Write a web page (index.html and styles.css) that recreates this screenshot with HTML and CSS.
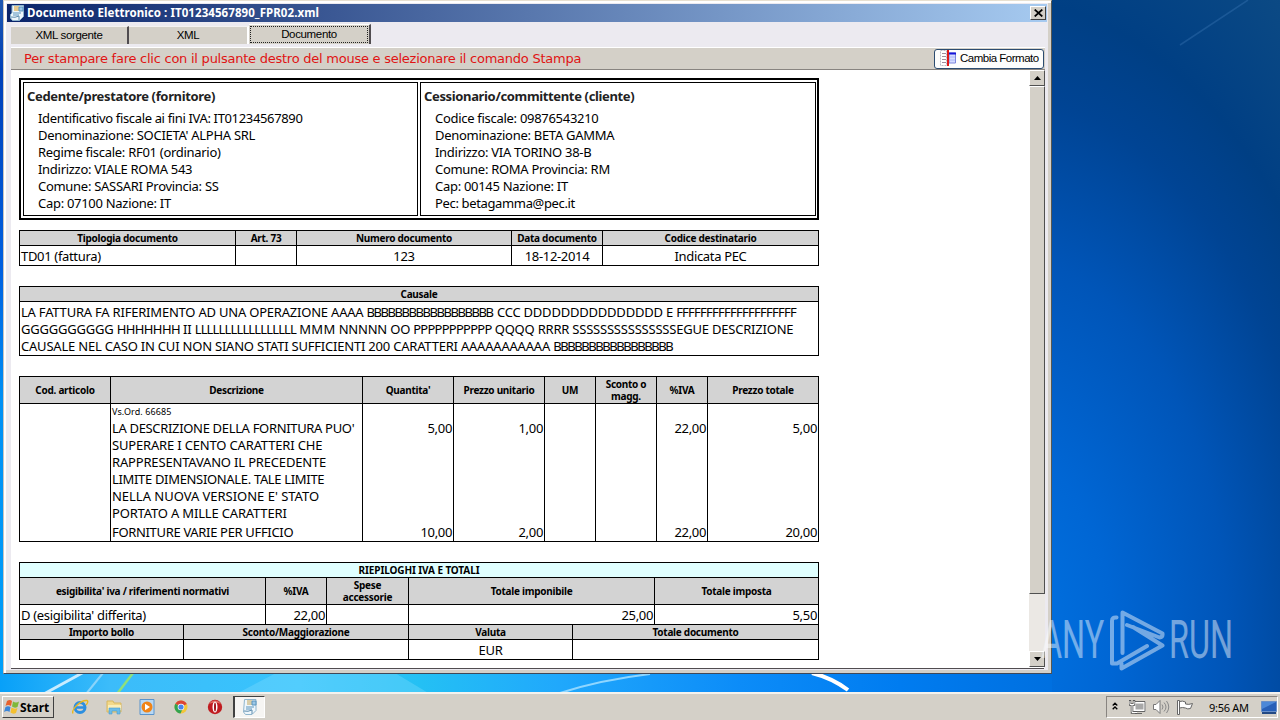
FILE: index.html
```html
<!DOCTYPE html>
<html lang="it">
<head>
    <meta charset="UTF-8">
    <meta name="viewport" content="width=device-width, initial-scale=1.0">
    <title>Documento Elettronico</title>
    <link rel="stylesheet" href="styles.css">
</head>
<body>
    <!-- wallpaper streaks -->
    <svg class="streaks" viewBox="0 0 1280 720">
        <path d="M1248 0 L1180 45" stroke="#3a76b4" stroke-width="1.5" opacity=".4"/>
        <path d="M42 695 L84 672" stroke="#c8ecff" stroke-width="3"/>
        <path d="M86 694 L103 673" stroke="#8ad4fa" stroke-width="2"/>
        <path d="M117 694 L133 673" stroke="#8fe07c" stroke-width="2.5"/>
        <path d="M236 694 L276 673 L395 673 L430 694z" fill="#8ee0ff" opacity=".3"/>
        <path d="M560 693 Q600 680 650 674" stroke="#8fd6ff" stroke-width="2" fill="none"/>
        <path d="M812 673 Q832 678 848 690" stroke="#fff" stroke-width="4" fill="none"/>
    </svg>

    <main class="window">
        <header class="titlebar">
            <svg class="app-icon" width="14" height="16" viewBox="0 0 14 16">
                <path d="M2 .5h11.500v11l-4 4H2.500L.5 13V9.500L2 8z" fill="#eef6fb" stroke="#8fb4cc"/>
                <path d="M4 1h5v5H4z" fill="#e8c98c"/>
                <path d="M9 2h4v4H9zM3 8h8M3 10h6" fill="#9cc7e6" stroke="#5b94bd"/>
                <path d="M1 12q4 1 8-1v4" fill="none" stroke="#5e8cae"/>
            </svg>
            <h1>Documento Elettronico : IT01234567890_FPR02.xml</h1>
            <button class="close" aria-label="Chiudi">
                <svg width="9" height="8" viewBox="0 0 9 8"><path d="M.7.5l7.600 7M8.300.5l-7.600 7" stroke="#000" stroke-width="1.700"/></svg>
            </button>
        </header>

        <nav class="tabs">
            <div class="tab"><span>XML sorgente</span></div>
            <div class="tab tab-xml"><span>XML</span></div>
            <div class="tab active"><span>Documento</span></div>
        </nav>

        <div class="toolbar">
            <p class="hint">Per stampare fare clic con il pulsante destro del mouse e selezionare il comando Stampa</p>
            <button class="format-btn">
                <svg width="16" height="16" viewBox="0 0 16 16">
                    <path d="M.5.500h6v15h-6z" fill="#fff" stroke="#b9b9c4" stroke-dasharray="2 1"/>
                    <path d="M2 3.500h4M2 6.500h4M2 9.500h4M2 12.500h4" stroke="#a08c9c"/>
                    <path d="M9 3h6.500v10H9z" fill="#d5dcff" stroke="#7d86dc"/>
                    <path d="M9 3.500h7" stroke="#1414d8" stroke-width="2"/>
                    <path d="M10 7h5M10 10h5" stroke="#aab4f4"/>
                    <path d="M8 0v16" stroke="#e01818" stroke-width="2"/>
                </svg>
                <span>Cambia Formato</span>
            </button>
        </div>

        <div class="viewport">
            <div class="page">
                <section class="parties">
                    <div class="party">
                        <h2>Cedente/prestatore (fornitore)</h2>
                        <ul>
                            <li class="tight">Identificativo fiscale ai fini IVA: IT01234567890</li>
                            <li>Denominazione: SOCIETA' ALPHA SRL</li>
                            <li>Regime fiscale: RF01 (ordinario)</li>
                            <li>Indirizzo: VIALE ROMA 543</li>
                            <li>Comune: SASSARI Provincia: SS</li>
                            <li>Cap: 07100 Nazione: IT</li>
                        </ul>
                    </div>
                    <div class="party">
                        <h2>Cessionario/committente (cliente)</h2>
                        <ul>
                            <li>Codice fiscale: 09876543210</li>
                            <li>Denominazione: BETA GAMMA</li>
                            <li>Indirizzo: VIA TORINO 38-B</li>
                            <li>Comune: ROMA Provincia: RM</li>
                            <li>Cap: 00145 Nazione: IT</li>
                            <li class="tight">Pec: betagamma@pec.it</li>
                        </ul>
                    </div>
                </section>

                <section class="sheet sheet-doc">
                    <div class="row head cols-doc">
                        <div>Tipologia documento</div><div>Art. 73</div><div>Numero documento</div><div>Data documento</div><div>Codice destinatario</div>
                    </div>
                    <div class="row data cols-doc">
                        <div class="left">TD01 (fattura)</div><div></div><div>123</div><div>18-12-2014</div><div>Indicata PEC</div>
                    </div>
                </section>

                <section class="sheet">
                    <div class="row head"><div>Causale</div></div>
                    <div class="row causale">
                        <div>LA FATTURA FA RIFERIMENTO AD UNA OPERAZIONE AAAA <span class="narrow">BBBBBBBBBBBBBBBBBB</span> &#8202;CCC DDDDDDDDDDDDDDD E <span class="tight">FFFFFFFFFFFFFFFFFFFF</span><br>GGGGGGGGGG <span class="snug">HHHHHHH</span> II <span class="tighter">LLLLLLLLLLLLLLLLL</span> <span class="wide">MMM</span> NNNNN OO <span class="tight">PPPPPPPPPPP</span> QQQQ RRRR SSSSSSSSSSSSSSSEGUE DESCRIZIONE<br>CAUSALE NEL CASO IN CUI NON SIANO STATI SUFFICIENTI 200 CARATTERI AAAAAAAAAAA <span class="narrow">BBBBBBBBBBBBBBBBB</span></div>
                    </div>
                </section>

                <section class="sheet">
                    <div class="row head tall cols-items">
                        <div>Cod. articolo</div><div>Descrizione</div><div>Quantita'</div><div>Prezzo unitario</div><div>UM</div><div>Sconto o<br>magg.</div><div>%IVA</div><div>Prezzo totale</div>
                    </div>
                    <div class="row item first cols-items">
                        <div></div>
                        <div class="desc"><small>Vs.Ord. 66685</small>LA DESCRIZIONE DELLA FORNITURA PUO'<br><span class="loose">SUPERARE I CENTO CARATTERI CHE</span><br><span class="loose">RAPPRESENTAVANO IL PRECEDENTE</span><br>LIMITE DIMENSIONALE. TALE LIMITE<br><span class="looser">NELLA NUOVA VERSIONE E' STATO</span><br><span class="loose">PORTATO A MILLE CARATTERI</span></div>
                        <div>5,00</div><div>1,00</div><div></div><div></div><div>22,00</div><div>5,00</div>
                    </div>
                    <div class="row item last cols-items">
                        <div></div><div class="desc">FORNITURE VARIE PER UFFICIO</div><div>10,00</div><div>2,00</div><div></div><div></div><div>22,00</div><div>20,00</div>
                    </div>
                </section>

                <section class="sheet">
                    <div class="row head title"><div>RIEPILOGHI IVA E TOTALI</div></div>
                    <div class="row head tall cols-vat">
                        <div>esigibilita' iva / riferimenti normativi</div><div>%IVA</div><div>Spese<br>accessorie</div><div>Totale imponibile</div><div>Totale imposta</div>
                    </div>
                    <div class="row data nums cols-vat">
                        <div class="left">D (esigibilita' differita)</div><div>22,00</div><div></div><div>25,00</div><div>5,50</div>
                    </div>
                    <div class="row head cols-total">
                        <div>Importo bollo</div><div>Sconto/Maggiorazione</div><div>Valuta</div><div>Totale documento</div>
                    </div>
                    <div class="row data cols-total">
                        <div></div><div></div><div>EUR</div><div></div>
                    </div>
                </section>
            </div>
            <div class="scrollbar">
                <div class="arrow"><svg width="7" height="4" viewBox="0 0 7 4"><path d="M0 4L3.500 0 7 4z"/></svg></div>
                <div class="thumb"></div>
                <div class="arrow bottom"><svg width="7" height="4" viewBox="0 0 7 4"><path d="M0 0h7L3.500 4z"/></svg></div>
            </div>
        </div>
    </main>

    <div class="watermark">
        <span class="word">ANY</span>
        <svg width="56" height="64" viewBox="1109 608 56 64">
            <path d="M1116.500 617.500Q1112 617 1112 621V663.500H1117L1147 646M1122.500 653V612.500L1162.500 633.500Q1163 637 1159.500 637.500L1127 625M1121.500 663.500V668.500L1162.500 645.500L1133 627" fill="none" stroke="#fff" stroke-width="4" stroke-linejoin="round" stroke-linecap="round"/>
        </svg>
        <span class="word">RUN</span>
    </div>

    <footer class="taskbar">
        <button class="start">
            <svg width="16" height="16" viewBox="0 0 16 16">
                <path d="M3 2q3-2 5 0L7 7Q4 5 1.500 7z" fill="#e8622c"/>
                <path d="M9 2.500q3 2 6 0L13.500 8q-3 1.500-5.500-.5z" fill="#7fb83a"/>
                <path d="M1.500 8Q4 6.500 6.500 8L5.500 13Q3 11 0 13z" fill="#3c86d8"/>
                <path d="M7.500 8.500q3 2 6 .5L12 14q-3 1.500-5.500-.5z" fill="#f4c030"/>
            </svg>
            <span>Start</span>
        </button>
        <div class="launchers">
            <svg width="17" height="16" viewBox="0 0 17 16">
                <circle cx="8" cy="8.500" r="5" fill="none" stroke="#2d8fe0" stroke-width="3"/>
                <path d="M4 8.500h9" stroke="#2d8fe0" stroke-width="2.500"/>
                <path d="M1 14.500C-1 11 8 1 15 1.500c1.500.5.500 3-1 4.500" fill="none" stroke="#e8b820" stroke-width="1.400"/>
            </svg>
            <svg width="17" height="16" viewBox="0 0 17 16">
                <path d="M1 2h6l1 2h7v9H1z" fill="#f3d98a" stroke="#d8b860"/>
                <path d="M2 6h13v5H2z" fill="#fbeeb8"/>
                <path d="M3 15V9h11v6h-3v-3H6v3z" fill="#6cbce8" stroke="#4a9ccc" stroke-width=".6"/>
            </svg>
            <svg width="17" height="16" viewBox="0 0 17 16">
                <path d="M1 .5h14v15H1z" fill="#b8d8f4" stroke="#5a94cc"/>
                <circle cx="8" cy="8" r="5.500" fill="#f08418"/>
                <path d="M6 4.800v6.400l5-3.200z" fill="#fff"/>
            </svg>
            <svg width="17" height="16" viewBox="0 0 17 16">
                <circle cx="8" cy="8" r="6.500" fill="#f2c63a"/>
                <path d="M8 8L2.300 4.800A6.500 6.500 0 0 1 13.800 5z" fill="#dc4436"/>
                <path d="M8 8L2.300 4.800A6.500 6.500 0 0 0 7.500 14.500L10 9z" fill="#32a350"/>
                <circle cx="8" cy="8" r="3.300" fill="#fff"/>
                <circle cx="8" cy="8" r="2.600" fill="#4a84ec"/>
            </svg>
            <svg width="17" height="16" viewBox="0 0 17 16">
                <circle cx="8" cy="8" r="7.200" fill="#c01c20"/>
                <path d="M2 5a7 7 0 0 1 12 0q-6-3-12 0" fill="#e06a60"/>
                <ellipse cx="8" cy="8" rx="2.500" ry="5.500" fill="#fff"/>
                <ellipse cx="8" cy="8" rx="1" ry="4.500" fill="#a01418"/>
            </svg>
            <div class="running">
                <svg width="14" height="16" viewBox="0 0 14 16">
                    <path d="M1.500.500h11.500v11l-4 4H2.500L.5 13z" fill="#eef6fb" stroke="#8fb4cc"/>
                    <path d="M4 1h5v5H4z" fill="#d9cda8"/>
                    <path d="M9 2h4v4H9zM3 8h8M3 10h6" fill="#9cc7e6" stroke="#5b94bd"/>
                    <path d="M1 12q4 1 8-1v4" fill="none" stroke="#5e8cae"/>
                </svg>
            </div>
        </div>
        <div class="tray">
            <svg class="chevrons" width="6" height="8" viewBox="0 0 6 8"><path d="M.7 3.500L3 1.200l2.300 2.300M.7 7.300L3 5l2.300 2.300" fill="none" stroke="#000" stroke-width="1.300"/></svg>
            <svg class="net" width="17" height="15" viewBox="0 0 17 15">
                <path d="M5.500 2.500h10v8h-10z" fill="#a8a8a8" stroke="#fff" stroke-width="2"/>
                <path d="M5.500 1.500h10.500v10H4.500M6 13.500h7" fill="none" stroke="#666"/>
                <path d="M1 0v4.500h4V0M3 4.500v8h5" fill="none" stroke="#555" stroke-width="2.400"/>
                <path d="M1 1v3.500h4V1M3 4.500v8h5" fill="none" stroke="#fff" stroke-width="1"/>
            </svg>
            <svg class="vol" width="17" height="14" viewBox="0 0 17 14">
                <path d="M.5 4.500h2.500l4-4v13l-4-4H.5z" fill="#fff" stroke="#777"/>
                <path d="M9 4.500q2 2.500 0 5M11 2.500q4 4.500 0 9M13.500 1q4.500 6 0 12" fill="none" stroke="#888"/>
            </svg>
            <svg class="flag" width="17" height="15" viewBox="0 0 17 15">
                <path d="M.5.500h2v14h-2zM2.500 1.500q3-1 6 .5v2q3 1 7-.5l-2 5q-3 1-5-.5-3-1-6 0z" fill="#fff" stroke="#666"/>
            </svg>
            <time>9:56 AM</time>
            <svg class="desktop-icon" width="16" height="13" viewBox="0 0 16 13">
                <path d="M.5.500h15v10H.5z" fill="#2860b8" stroke="#6a90c8"/>
                <path d="M1 1h14L1 8z" fill="#4c88d8"/>
                <path d="M1 12h14" stroke="#244a84" stroke-width="2"/>
            </svg>
        </div>
    </footer>
</body>
</html>
```
FILE: styles.css
```css
:root {
    --face: #d4d0c8;
    --panel: #eceaf0;
    --dark: #504c50;
    --ink: #000;
    --head: #d3d3d3;
}

* {
    margin: 0;
    padding: 0;
    box-sizing: border-box;
}

body {
    position: relative;
    display: flex;
    flex-direction: column;
    justify-content: flex-end;
    width: 1280px;
    height: 720px;
    overflow: hidden;
    font-family: "Noto Sans", sans-serif;
    color: var(--ink);
    background:
        linear-gradient(to right, #08a0f8, #3cbcfa 110px, #38c4fc 300px, #24c0f4 420px, #20a8fc 560px, #0c8cf8 740px, #007cf0 900px, #0070e0 1050px) 0 674px / 1052px 20px no-repeat,
        linear-gradient(#2058b0, #0040b8 70px, #0060e0 270px, #0090f4 400px, #00a0fa) 0 0 / 4px 700px no-repeat,
        radial-gradient(ellipse 380px 640px at 1000px 640px, #0074e4, #0066d4 30%, #0055b8 60%, #004494 85%, #003f84 100%, #0c4a84 125%);
}

button {
    font-family: inherit;
    color: inherit;
}

svg {
    flex: none;
}

.streaks {
    position: absolute;
    inset: 0;
    width: 1280px;
    height: 720px;
}

/* ---- window ---- */

.window {
    position: absolute;
    left: 3px;
    top: 0;
    width: 1049px;
    height: 674px;
    padding: 4px 4px 3px 3px;
    display: flex;
    flex-direction: column;
    background: var(--panel);
    border-top: 1px solid #e8e0d0;
    border-left: 1px solid #c8c4c0;
    border-right: 1px solid #585850;
    border-bottom: 1px solid #404858;
    box-shadow: inset 2px 2px #fff, inset -3px -3px var(--face);
}

.titlebar {
    display: flex;
    align-items: center;
    height: 18px;
    flex: none;
    margin-top: -1px;
    padding: 0 1px 0 3px;
    background: linear-gradient(to right, #0a246a, #a6caf0);
    color: #fff;
}

.titlebar h1 {
    flex: 1;
    margin-left: 3px;
    font-size: 11.5px;
    line-height: 16px;
    font-weight: 700;
    letter-spacing: 0.07px;
}

.close {
    display: flex;
    align-items: center;
    justify-content: center;
    width: 16px;
    height: 14px;
    background: var(--face);
    border: 1px solid;
    border-color: #fff #404040 #404040 #fff;
}

.tabs {
    display: flex;
    align-items: flex-end;
    height: 22px;
    flex: none;
    padding-left: 4px;
    font-family: "Liberation Sans", sans-serif;
    font-size: 11.5px;
    line-height: 17px;
    text-align: center;
}

.tab {
    width: 118px;
    height: 18px;
    background: var(--face);
    border-top: 1px solid #f4f2f0;
    border-right: 2px solid var(--dark);
}

.tab span {
    letter-spacing: -0.35px;
}

.tab-xml {
    width: 120px;
    border-right-color: #fff;
}

.tab.active {
    width: 122px;
    height: 20px;
    padding: 1px;
    border-top-color: #fff;
}

.tab.active span {
    display: block;
    height: 17px;
    line-height: 15px;
    border: 1px dotted #222;
}

.toolbar {
    display: flex;
    justify-content: space-between;
    align-items: center;
    height: 23px;
    flex: none;
    margin: 3px 2px 0 4px;
    padding: 0 1px 0 13px;
    background: var(--face);
    border-top: 1px solid #fff;
    border-bottom: 1px solid #888480;
}

.hint {
    font-family: "DejaVu Sans", sans-serif;
    font-size: 13px;
    line-height: 20px;
    letter-spacing: -0.245px;
    color: #e01414;
}

.format-btn {
    display: flex;
    align-items: center;
    gap: 4px;
    width: 110px;
    height: 20px;
    padding: 0 0 1px 5px;
    background: #fdfdfc;
    border: 1px solid #2c4c70;
    border-radius: 3px;
    font-family: "Liberation Sans", sans-serif;
    font-size: 11.5px;
    letter-spacing: -0.5px;
    white-space: nowrap;
}

.viewport {
    display: flex;
    height: 599px;
    flex: none;
    margin: 0 3px 0 4px;
    background: #fff;
    border-bottom: 1px solid var(--dark);
}

.page {
    width: 1018px;
    flex: none;
    padding: 8px 0 0 8px;
}

.scrollbar {
    display: flex;
    flex-direction: column;
    width: 16px;
    height: 597px;
    flex: none;
    background: #ebe8e4;
}

.arrow,
.thumb {
    background: var(--face);
    border: 1px solid;
    border-color: #fff #505050 #505050 #fff;
}

.arrow {
    display: flex;
    align-items: center;
    justify-content: center;
    height: 16px;
}

.thumb {
    height: 508px;
}

.arrow.bottom {
    margin-top: auto;
}

/* ---- invoice ---- */

.parties {
    display: flex;
    gap: 2px;
    width: 800px;
    height: 142px;
    padding: 2px 1px 2px 2px;
    border: 2px solid #000;
}

.party {
    flex: 0 0 395px;
    padding: 3px 3px 0;
    border: 1px solid #000;
}

.party + .party {
    flex: 1;
}

.party h2 {
    font-size: 13px;
    line-height: 20px;
    font-weight: 700;
    letter-spacing: -0.35px;
    color: #222;
}

.party ul {
    margin: 4px 0 0 11px;
    list-style: none;
    font-size: 13px;
    line-height: 17px;
    letter-spacing: -0.29px;
}

.party .tight {
    letter-spacing: -0.35px;
}

.sheet {
    width: 800px;
    margin-bottom: 20px;
    border-top: 1px solid #000;
    border-left: 1px solid #000;
    letter-spacing: -0.33px;
    font-size: 13px;
}

.sheet-doc {
    margin-top: 10px;
}

.row {
    display: grid;
    grid-template-columns: 799px;
}

.cols-doc { grid-template-columns: 216px 61px 215px 91px 216px; }
.cols-items { grid-template-columns: 91px 252px 91px 91px 51px 61px 51px 111px; }
.cols-vat { grid-template-columns: 246px 61px 82px 246px 164px; }
.cols-total { grid-template-columns: 164px 225px 164px 246px; }

.row > div {
    border-right: 1px solid #000;
    border-bottom: 1px solid #000;
    text-align: center;
    white-space: nowrap;
}

.head {
    height: 15px;
    background: var(--head);
    font-size: 10px;
    line-height: 14px;
    font-weight: 700;
    letter-spacing: -0.27px;
}

.head.tall {
    height: 27px;
    line-height: 12px;
}

.head.tall > div {
    display: flex;
    align-items: center;
    justify-content: center;
}

.head.title {
    background: #e0ffff;
    letter-spacing: -0.1px;
}

.data > div {
    height: 20px;
    line-height: 20px;
}

.row > .left,
.causale > div {
    padding-left: 1px;
    text-align: left;
}

.causale > div {
    height: 54px;
    padding-top: 2px;
    line-height: 17px;
    letter-spacing: -0.21px;
}

/* per-letter fitting of the long runs */
.causale .narrow { letter-spacing: -1.45px; }
.causale .tighter { letter-spacing: -0.85px; }
.causale .tight { letter-spacing: -0.75px; }
.causale .snug { letter-spacing: -0.6px; }
.causale .wide { letter-spacing: 0.3px; }

.row.item > div {
    border-bottom: 0;
    padding-right: 1px;
    text-align: right;
    line-height: 17px;
}

.row.first > div {
    height: 118px;
    padding-top: 16px;
}

.row.last > div {
    height: 20px;
    padding-top: 2px;
    border-bottom: 1px solid #000;
}

.row.item > .desc {
    text-align: left;
    padding-left: 1px;
}

.row.first > .desc {
    padding-top: 0;
}

.desc .loose { letter-spacing: -0.17px; }
.desc .looser { letter-spacing: -0.02px; }

.desc small {
    display: block;
    height: 16px;
    font-size: 9px;
    line-height: 15px;
    letter-spacing: 0.1px;
}

.row.nums > div:not(.left) {
    padding-right: 1px;
    text-align: right;
}

/* ---- watermark ---- */

.watermark {
    position: absolute;
    left: 1041px;
    top: 608px;
    display: flex;
    align-items: center;
    gap: 4px;
    width: 200px;
    height: 64px;
    opacity: 0.45;
    color: #fff;
    font-family: Roboto, sans-serif;
    font-size: 53px;
    line-height: 64px;
}

.watermark .word {
    width: 64px;
    transform: scaleX(0.61);
    transform-origin: 0 50%;
}

/* ---- taskbar ---- */

.taskbar {
    position: relative;
    display: flex;
    align-items: center;
    height: 28px;
    padding: 0 2px;
    background: var(--face);
    border-top: 2px solid #f4f2ee;
}

.start {
    display: flex;
    align-items: center;
    width: 52px;
    height: 22px;
    padding: 0 1px;
    background: var(--face);
    border: 1px solid;
    border-color: #fff #404040 #404040 #fff;
    font-size: 12px;
    font-weight: 700;
    letter-spacing: -0.1px;
}

.launchers {
    display: flex;
    align-items: center;
    gap: 16.7px;
    margin-left: 18px;
}

.running {
    display: flex;
    align-items: center;
    justify-content: center;
    width: 32px;
    height: 22px;
    margin-left: -7px;
    background: #f6f5f3;
    border: 1px solid;
    border-color: #404040 #fff #fff #404040;
    border-left-width: 2px;
}

.tray {
    display: flex;
    align-items: center;
    width: 172px;
    height: 22px;
    margin-left: auto;
    padding-left: 5px;
    border: 1px solid;
    border-color: #888480 #fff #fff #888480;
}

.chevrons { margin-bottom: 2px; }
.net { margin-left: 11px; }
.vol { margin-left: 7px; }
.flag { margin-left: 7px; }

.tray time {
    margin-left: 15px;
    width: 42px;
    font-size: 11px;
    letter-spacing: -0.3px;
    white-space: nowrap;
}

.desktop-icon {
    margin-left: 10px;
}
```
